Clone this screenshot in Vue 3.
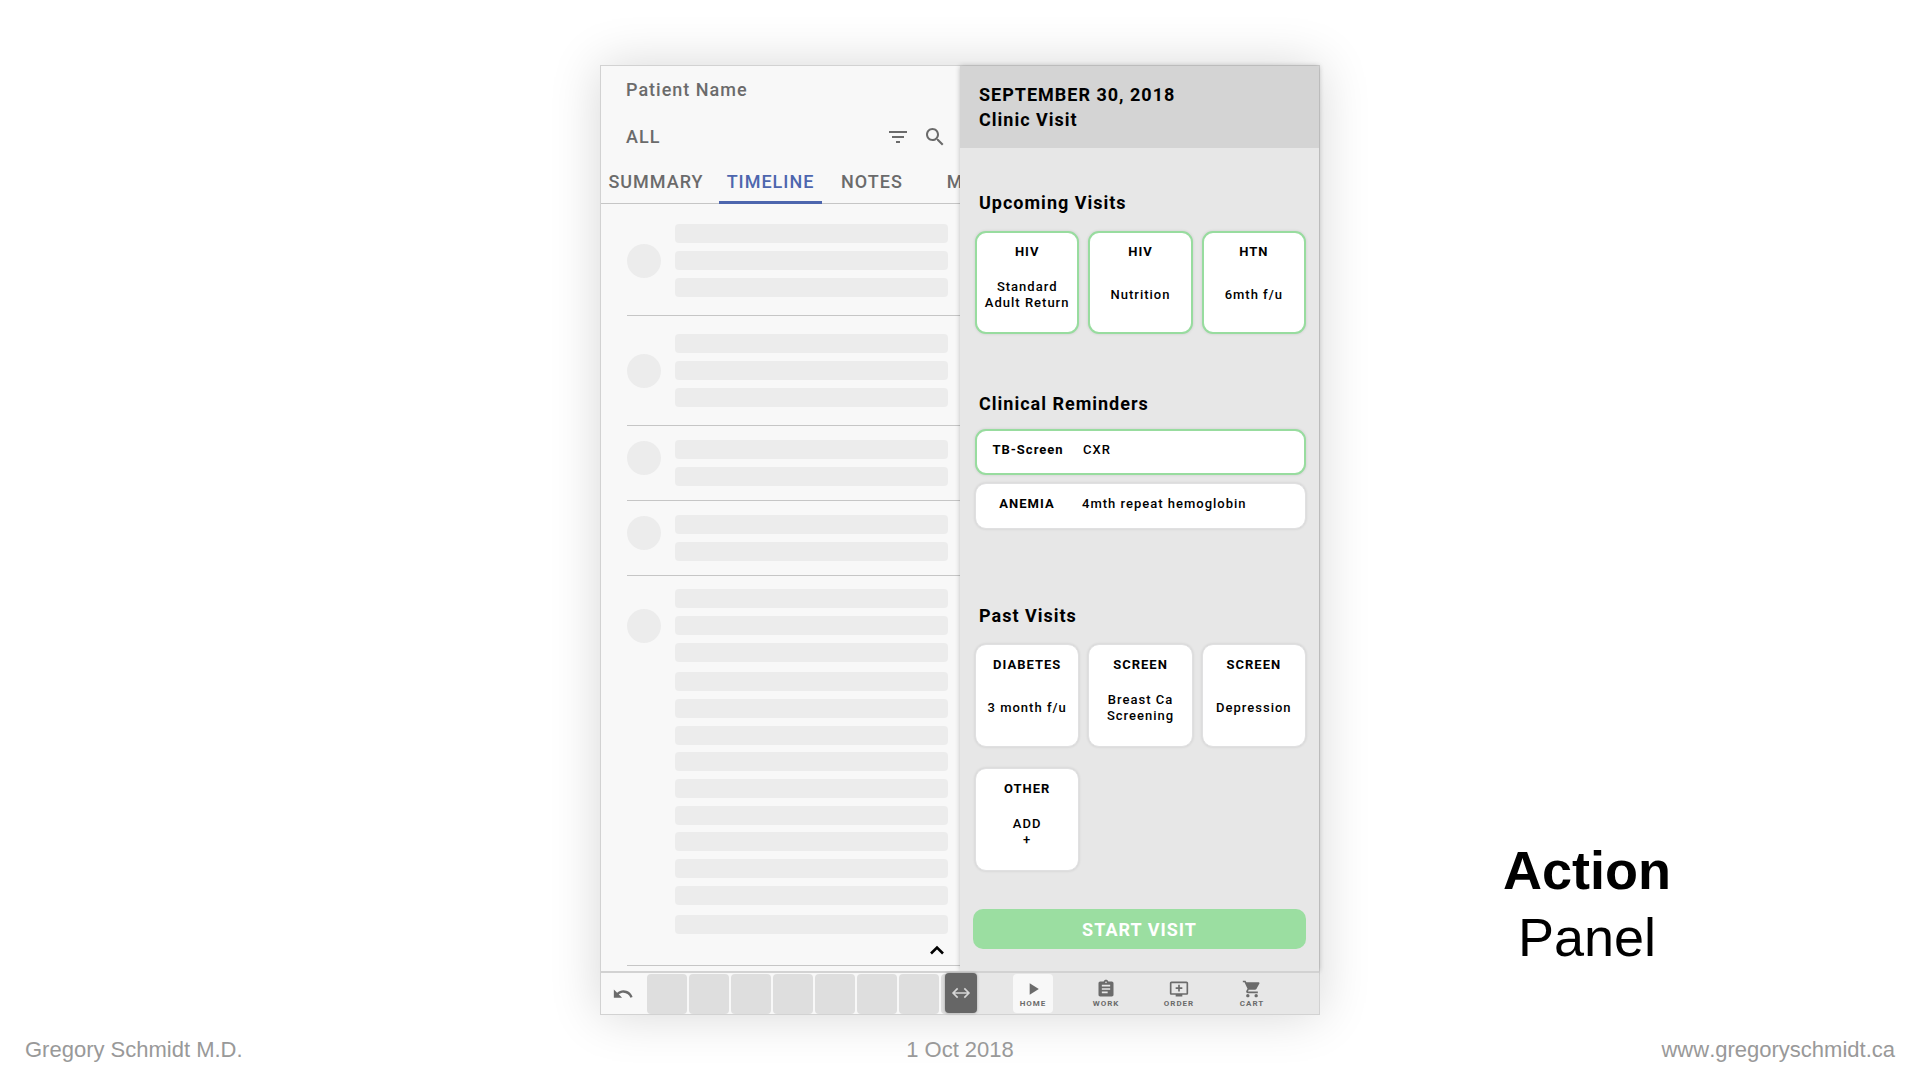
<script setup>
const tabs = ['SUMMARY', 'TIMELINE', 'NOTES', 'M']

// Each entry is a list of line groups; each number is the count of placeholder lines.
const entries = [
  { size: 'regular', groups: [3] },
  { size: 'regular', groups: [3] },
  { size: 'compact', groups: [2] },
  { size: 'compact', groups: [2] },
  { size: 'long', groups: [3, 3, 3, 3, 1] },
]

const upcoming = [
  { title: 'HIV', lines: ['Standard', 'Adult Return'] },
  { title: 'HIV', lines: ['Nutrition'] },
  { title: 'HTN', lines: ['6mth f/u'] },
]

const reminders = [
  { title: 'TB-Screen', text: 'CXR', active: true },
  { title: 'ANEMIA', text: '4mth repeat hemoglobin', active: false },
]

const past = [
  { title: 'DIABETES', lines: ['3 month f/u'] },
  { title: 'SCREEN', lines: ['Breast Ca', 'Screening'] },
  { title: 'SCREEN', lines: ['Depression'] },
  { title: 'OTHER', lines: ['ADD', '+'] },
]

const nav = [
  { label: 'HOME', active: true, path: 'M8 5v14l11-7z' },
  {
    label: 'WORK',
    path: 'M19 3h-4.18C14.4 1.84 13.3 1 12 1c-1.3 0-2.4.84-2.82 2H5c-1.1 0-2 .9-2 2v14c0 1.1.9 2 2 2h14c1.1 0 2-.9 2-2V5c0-1.1-.9-2-2-2zm-7 0c.55 0 1 .45 1 1s-.45 1-1 1-1-.45-1-1 .45-1 1-1zm2 14H7v-2h7v2zm3-4H7v-2h10v2zm0-4H7V7h10v2z',
  },
  {
    label: 'ORDER',
    path: 'M21 3H3c-1.11 0-2 .89-2 2v12c0 1.1.89 2 2 2h5v2h8v-2h5c1.1 0 1.99-.9 1.99-2L23 5c0-1.11-.9-2-2-2zm0 14H3V5h18v12zm-5-7v2h-3v3h-2v-3H8v-2h3V7h2v3h3z',
  },
  {
    label: 'CART',
    path: 'M7 18c-1.1 0-1.99.9-1.99 2S5.9 22 7 22s2-.9 2-2-.9-2-2-2zM1 2v2h2l3.6 7.59-1.35 2.45c-.16.28-.25.61-.25.96 0 1.1.9 2 2 2h12v-2H7.42c-.14 0-.25-.11-.25-.25l.03-.12.9-1.63h7.45c.75 0 1.41-.41 1.75-1.03l3.58-6.49c.08-.14.12-.31.12-.48 0-.55-.45-1-1-1H5.21l-.94-2H1zm16 16c-1.1 0-1.99.9-1.99 2s.89 2 1.99 2 2-.9 2-2-.9-2-2-2z',
  },
]
</script>

<template>
  <div class="slide">
    <main class="stage">
      <section class="device">
        <div class="panes">
          <div class="chart">
            <header class="chart-head">
              <div class="patient">Patient Name</div>
              <div class="filter-row">
                <span class="scope">ALL</span>
                <button class="icon-button" aria-label="Filter">
                  <svg viewBox="0 0 24 24" width="24" height="24"><path d="M10 18h4v-2h-4v2zM3 6v2h18V6H3zm3 7h12v-2H6v2z" /></svg>
                </button>
                <button class="icon-button" aria-label="Search">
                  <svg viewBox="0 0 24 24" width="24" height="24"><path d="M15.5 14h-.79l-.28-.27C15.41 12.59 16 11.11 16 9.5 16 5.91 13.09 3 9.5 3S3 5.91 3 9.5 5.91 16 9.5 16c1.61 0 3.09-.59 4.23-1.57l.27.28v.79l5 4.99L20.49 19l-4.99-5zm-6 0C7.01 14 5 11.99 5 9.5S7.01 5 9.5 5 14 7.01 14 9.5 11.99 14 9.5 14z" /></svg>
                </button>
              </div>
            </header>
            <nav class="tabs">
              <a v-for="tab in tabs" :key="tab" href="#" class="tab" :class="{ active: tab === 'TIMELINE' }">{{ tab }}</a>
            </nav>
            <ul class="timeline">
              <li v-for="(entry, i) in entries" :key="i" class="entry" :class="entry.size">
                <div class="entry-row">
                  <span class="avatar"></span>
                  <div class="groups">
                    <div v-for="(count, g) in entry.groups" :key="g" class="group">
                      <span v-for="n in count" :key="n" class="line"></span>
                    </div>
                  </div>
                </div>
                <button v-if="entry.size === 'long'" class="collapse" aria-label="Collapse entry">
                  <svg viewBox="0 0 24 24" width="24" height="24"><path d="M6 15.500 12 9.500l6 6" fill="none" stroke="#000" stroke-width="2.600" /></svg>
                </button>
              </li>
            </ul>
          </div>

          <aside class="panel">
            <header class="panel-head">
              <div>SEPTEMBER 30, 2018</div>
              <div>Clinic Visit</div>
            </header>
            <div class="panel-body">
              <section class="block">
                <h2>Upcoming Visits</h2>
                <div class="cards">
                  <button v-for="(card, i) in upcoming" :key="i" class="card active">
                    <strong>{{ card.title }}</strong>
                    <span class="card-text"><span v-for="line in card.lines" :key="line">{{ line }}</span></span>
                  </button>
                </div>
              </section>
              <section class="block reminders">
                <h2>Clinical Reminders</h2>
                <div class="rows">
                  <button v-for="item in reminders" :key="item.title" class="row" :class="{ active: item.active }">
                    <strong>{{ item.title }}</strong>
                    <span>{{ item.text }}</span>
                  </button>
                </div>
              </section>
              <section class="block past">
                <h2>Past Visits</h2>
                <div class="cards">
                  <button v-for="(card, i) in past" :key="i" class="card">
                    <strong>{{ card.title }}</strong>
                    <span class="card-text"><span v-for="line in card.lines" :key="line">{{ line }}</span></span>
                  </button>
                </div>
              </section>
              <button class="start">START VISIT</button>
            </div>
          </aside>
        </div>

        <footer class="bar">
          <div class="bar-left">
            <button class="undo" aria-label="Undo">
              <svg viewBox="0 0 24 24" width="22" height="22"><path d="M12.500 8c-2.650 0-5.050.99-6.900 2.600L2 7v9h9l-3.620-3.620c1.390-1.160 3.160-1.880 5.120-1.880 3.540 0 6.550 2.310 7.600 5.500l2.370-.78C21.080 11.030 17.150 8 12.500 8z" /></svg>
            </button>
            <span v-for="n in 8" :key="n" class="slot"></span>
          </div>
          <nav class="bar-right">
            <a v-for="item in nav" :key="item.label" href="#" class="nav-item" :class="{ active: item.active }">
              <svg viewBox="0 0 24 24" width="20" height="20"><path :d="item.path" /></svg>
              <span>{{ item.label }}</span>
            </a>
          </nav>
          <button class="handle" aria-label="Resize panes">
            <svg viewBox="0 0 24 24" width="20" height="20"><path d="M8 6.500 2.500 12 8 17.500M16 6.500l5.500 5.500-5.500 5.500M3 12h18" fill="none" stroke="#d6d6d6" stroke-width="2" /></svg>
          </button>
        </footer>
      </section>

      <h1 class="caption"><strong>Action</strong><span>Panel</span></h1>
    </main>

    <footer class="credits">
      <span>Gregory Schmidt M.D.</span>
      <span>1 Oct 2018</span>
      <a href="#">www.gregoryschmidt.ca</a>
    </footer>
  </div>
</template>

<style>
body {
  margin: 0;
  background: #fff;
}
</style>

<style scoped>
* {
  box-sizing: border-box;
}

button {
  margin: 0;
  padding: 0;
  border: 0;
  background: none;
  color: inherit;
  font: inherit;
  letter-spacing: inherit;
  cursor: pointer;
}

a {
  color: inherit;
  text-decoration: none;
}

svg {
  display: block;
  fill: currentColor;
}

.slide {
  display: flex;
  flex-direction: column;
  min-height: 100vh;
  font-family: "Liberation Sans", Arial, sans-serif;
}

.stage {
  display: grid;
  grid-template-columns: 5fr 6fr 5fr;
  padding-top: 65px;
}

.device {
  grid-column: 2;
  border: 1px solid #d2d2d2;
  background: #f8f8f8;
  box-shadow: 0 0 48px rgba(0, 0, 0, 0.16);
  font-family: Roboto, sans-serif;
  font-size: 18px;
  font-weight: 500;
  line-height: 25px;
  letter-spacing: 1px;
  color: #6b6b6b;
}

.panes {
  display: flex;
}

.chart {
  flex: 1;
  min-width: 0;
  overflow: hidden;
}

.chart-head {
  display: flex;
  flex-direction: column;
  gap: 22px;
  padding: 11px 13px 0 25px;
}

.filter-row {
  display: flex;
  align-items: center;
  gap: 13px;
}

.scope {
  flex: 1;
}

.tabs {
  display: grid;
  grid-template-columns: 110px 103px 84px 66px;
  column-gap: 8px;
  height: 55px;
  border-bottom: 1px solid #c6c6c6;
}

.tab {
  height: 55px;
  padding-top: 20px;
  text-align: center;
}

.tab.active {
  border-bottom: 3px solid #4d66ae;
  color: #4d66ae;
}

.timeline {
  margin: 0;
  padding: 2px 0 5px 26px;
  list-style: none;
}

.entry {
  border-bottom: 1px solid #c6c6c6;
}

.entry-row {
  display: flex;
  align-items: flex-start;
  gap: 14px;
  padding-right: 12px;
}

.regular {
  padding: 18px 0;
}

.compact {
  padding: 14px 0;
}

.long {
  padding: 13px 0 3px;
}

.avatar {
  width: 34px;
  height: 34px;
  margin-top: 20px;
  border-radius: 50%;
  background: #ececec;
}

.compact .avatar {
  margin-top: 1px;
}

.groups {
  display: flex;
  flex: 1;
  flex-direction: column;
  gap: 7px;
}

.group {
  display: flex;
  flex-direction: column;
  gap: 8px;
}

.group:nth-child(2),
.group:nth-child(5) {
  margin-top: 3px;
}

.line {
  height: 19px;
  border-radius: 4px;
  background: #ececec;
}

.collapse {
  display: block;
  margin: 4px 11px 0 auto;
}

.panel {
  position: relative;
  flex: 1;
  min-width: 0;
  background: #e7e7e7;
  box-shadow: 0 0 5px rgba(0, 0, 0, 0.24);
  color: #000;
}

.panel-head {
  padding: 16px 19px;
  background: #d4d4d4;
  font-weight: 700;
}

.panel-body {
  display: flex;
  flex-direction: column;
  padding: 42px 13px 20px;
}

.block {
  padding-left: 2px;
}

.reminders {
  margin-top: 56px;
}

.past {
  margin-top: 74px;
}

h2 {
  margin: 0 0 16px;
  padding-left: 4px;
  font: inherit;
  font-weight: 700;
}

.reminders h2 {
  margin-bottom: 13px;
}

.cards {
  display: grid;
  grid-template-columns: repeat(3, 1fr);
  gap: 20px 9px;
}

.card,
.row {
  border: 1px solid #e0e0e1;
  border-radius: 11px;
  background: #fff;
  box-shadow: 0 0 3px rgba(0, 0, 0, 0.12);
  font-size: 13px;
  line-height: 16px;
}

.card {
  display: flex;
  flex-direction: column;
  height: 103px;
  padding: 12px 0 4px;
}

.past .cards {
  row-gap: 21px;
}

.card.active {
  padding: 11px 0 3px;
}

.card.active,
.row.active {
  border: 2px solid #98dc9f;
}

.card strong,
.card-text {
  align-self: stretch;
}

.card-text {
  display: flex;
  flex: 1;
  flex-direction: column;
  justify-content: center;
}

.rows {
  display: flex;
  flex-direction: column;
  gap: 8px;
}

.row {
  display: grid;
  grid-template-columns: 102px 1fr;
  column-gap: 4px;
  align-items: center;
  height: 46px;
  padding-bottom: 4px;
  text-align: left;
}

.reminders {
  margin-top: 57px;
}

.row strong {
  text-align: center;
}

.start {
  height: 40px;
  margin-top: 38px;
  border-radius: 10px;
  background: #9bdea1;
  color: #fff;
  font-weight: 700;
}

.bar {
  position: relative;
  display: flex;
  border-top: 2px solid #d2d2d2;
}

.bar-left,
.bar-right {
  display: flex;
  flex: none;
  align-items: center;
  width: 50%;
  height: 41px;
}

.bar-left {
  gap: 2px;
  overflow: hidden;
}

.undo {
  display: flex;
  flex: none;
  justify-content: center;
  width: 44px;
}

.slot {
  flex: none;
  width: 40px;
  height: 40px;
  border-radius: 4px;
  background: #dedede;
}

.bar-right {
  gap: 33px;
  padding-left: 53px;
  background: #e7e7e7;
}

.nav-item {
  display: flex;
  flex-direction: column;
  align-items: center;
  width: 40px;
  height: 39px;
  padding-top: 5px;
  border-radius: 4px;
  font-size: 8px;
  font-weight: 700;
  line-height: 10px;
}

.nav-item.active {
  background: #f8f8f8;
}

.handle {
  position: absolute;
  top: 0;
  left: 50%;
  display: flex;
  align-items: center;
  justify-content: center;
  width: 32px;
  height: 40px;
  margin-left: -15px;
  border-radius: 4px;
  background: #666;
  box-shadow: 0 0 3px rgba(0, 0, 0, 0.3);
}

.caption {
  display: flex;
  flex-direction: column;
  align-self: end;
  align-items: center;
  margin: 0 66px 44px 0;
  font-size: 54px;
  font-weight: 400;
  line-height: 67px;
}

.credits {
  display: grid;
  grid-template-columns: 1fr auto 1fr;
  margin-top: auto;
  padding: 0 25px 16px;
  font-size: 22px;
  line-height: 28px;
  font-kerning: none;
  color: #999;
}

.credits a {
  text-align: right;
}
</style>
